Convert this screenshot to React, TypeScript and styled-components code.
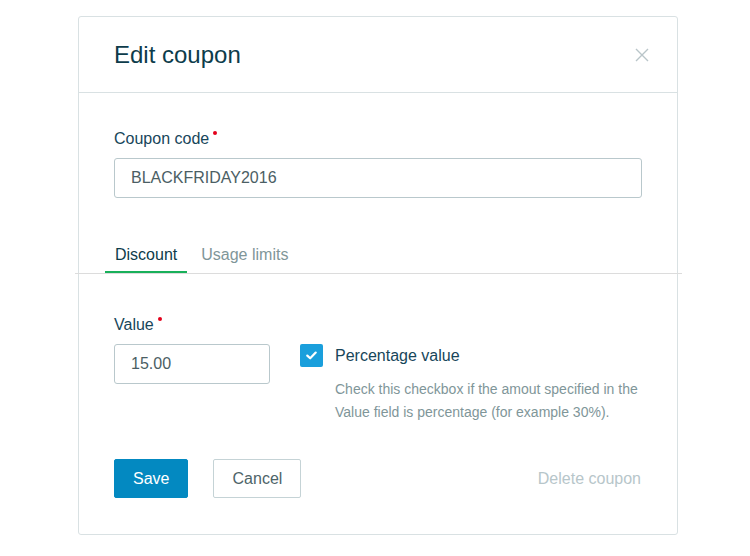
import React from 'react';
import styled, { createGlobalStyle } from 'styled-components';

const GlobalStyle = createGlobalStyle`
  html, body {
    margin: 0;
    padding: 0;
    background: #ffffff;
    font-family: "Liberation Sans", Arial, sans-serif;
  }
`;

const Page = styled.div`
  padding: 16px 0 0 78px;
`;

const Card = styled.div`
  width: 598px;
  border: 1px solid #d9e1e3;
  border-radius: 3px;
  background: #fff;
`;

const Header = styled.header`
  display: flex;
  align-items: center;
  justify-content: space-between;
  height: 75px;
  padding: 0 28px 0 35px;
  border-bottom: 1px solid #d9e1e3;
`;

const Title = styled.h1`
  margin: 0;
  font-size: 24px;
  font-weight: 400;
  color: #0d3c4b;
`;

const CloseButton = styled.button`
  display: flex;
  padding: 0;
  border: 0;
  background: none;
  cursor: pointer;
`;

const Body = styled.div`
  padding: 36px 35px 36px 35px;
`;

const Label = styled.label<{ required?: boolean }>`
  display: inline-block;
  position: relative;
  font-size: 16px;
  line-height: 20px;
  color: #17465a;
  margin-bottom: 9px;
  &::after {
    content: '';
    display: ${p => (p.required ? 'block' : 'none')};
    position: absolute;
    right: -8px;
    top: 2px;
    width: 4px;
    height: 4px;
    border-radius: 50%;
    background: #e3001b;
  }
`;

const Field = styled.div`
  display: flex;
  flex-direction: column;
  align-items: flex-start;
`;

const Input = styled.input<{ width?: number }>`
  box-sizing: border-box;
  width: ${p => (p.width ? `${p.width}px` : '100%')};
  height: 40px;
  padding: 0 16px;
  border: 1px solid #b9c8cc;
  border-radius: 3px;
  font-family: inherit;
  font-size: 16px;
  color: #4b5e64;
  outline: none;
`;

const Tabs = styled.div`
  display: flex;
  margin: 39px -40px 0 -39px;
  padding: 0 30px;
  border-bottom: 1px solid #dcdcdc;
`;

const Tab = styled.div<{ active?: boolean }>`
  padding: 8px 10px 6px;
  font-size: 16px;
  line-height: 20px;
  color: ${p => (p.active ? '#0d3c4b' : '#7f9699')};
  border-bottom: 2px solid ${p => (p.active ? '#18b05a' : 'transparent')};
  margin-right: 4px;
  cursor: pointer;
`;

const TabPanel = styled.div`
  padding-top: 41px;
`;

const ValueRow = styled.div`
  display: flex;
  align-items: flex-start;
  gap: 30px;
`;

const CheckGroup = styled.div`
  display: flex;
  flex-direction: column;
  margin-top: 29px;
`;

const CheckLine = styled.div`
  display: flex;
  align-items: center;
  gap: 12px;
`;

const CheckBox = styled.span`
  display: flex;
  align-items: center;
  justify-content: center;
  width: 23px;
  height: 23px;
  border-radius: 2px;
  background: #1a9fdc;
`;

const CheckText = styled.span`
  font-size: 16px;
  line-height: 20px;
  color: #17465a;
`;

const Hint = styled.p`
  margin: 11px 0 0 35px;
  font-size: 14px;
  line-height: 23px;
  color: #7f9699;
`;

const Actions = styled.div`
  display: flex;
  align-items: center;
  margin-top: 35px;
`;

const Button = styled.button<{ primary?: boolean }>`
  height: 39px;
  padding: 0 18px;
  margin-right: 25px;
  border-radius: 2px;
  font-family: inherit;
  font-size: 16px;
  cursor: pointer;
  border: 1px solid ${p => (p.primary ? '#0389c1' : '#c5d3d6')};
  background: ${p => (p.primary ? '#0389c1' : '#ffffff')};
  color: ${p => (p.primary ? '#ffffff' : '#4e6469')};
  min-width: ${p => (p.primary ? 74 : 88)}px;
`;

const LinkButton = styled.button`
  margin-left: auto;
  margin-right: 1px;
  padding: 0;
  border: 0;
  background: none;
  font-family: inherit;
  font-size: 16px;
  color: #b7c6ca;
  cursor: pointer;
`;

const App: React.FC = () => {
  return (
    <Page>
      <GlobalStyle />
      <Card>
        <Header>
          <Title>Edit coupon</Title>
          <CloseButton aria-label="Close">
            <svg width="14" height="14" viewBox="0 0 14 14">
              <path d="M1 1 L13 13 M13 1 L1 13" stroke="#b9c5c9" strokeWidth="1.4" fill="none" />
            </svg>
          </CloseButton>
        </Header>
        <Body>
          <Field>
            <Label required>Coupon code</Label>
            <Input defaultValue="BLACKFRIDAY2016" />
          </Field>

          <Tabs>
            <Tab active>Discount</Tab>
            <Tab>Usage limits</Tab>
          </Tabs>

          <TabPanel>
            <ValueRow>
              <Field>
                <Label required>Value</Label>
                <Input width={156} defaultValue="15.00" />
              </Field>
              <CheckGroup>
                <CheckLine>
                  <CheckBox>
                    <svg width="11" height="9" viewBox="0 0 11 9">
                      <path d="M1.3 4.6 L4.2 7.3 L9.7 1.6" stroke="#ffffff" strokeWidth="2.2" fill="none" strokeLinecap="round" strokeLinejoin="round" />
                    </svg>
                  </CheckBox>
                  <CheckText>Percentage value</CheckText>
                </CheckLine>
                <Hint>
                  Check this checkbox if the amout specified in the
                  <br />
                  Value field is percentage (for example 30%).
                </Hint>
              </CheckGroup>
            </ValueRow>
          </TabPanel>

          <Actions>
            <Button primary>Save</Button>
            <Button>Cancel</Button>
            <LinkButton>Delete coupon</LinkButton>
          </Actions>
        </Body>
      </Card>
    </Page>
  );
};

export default App;
